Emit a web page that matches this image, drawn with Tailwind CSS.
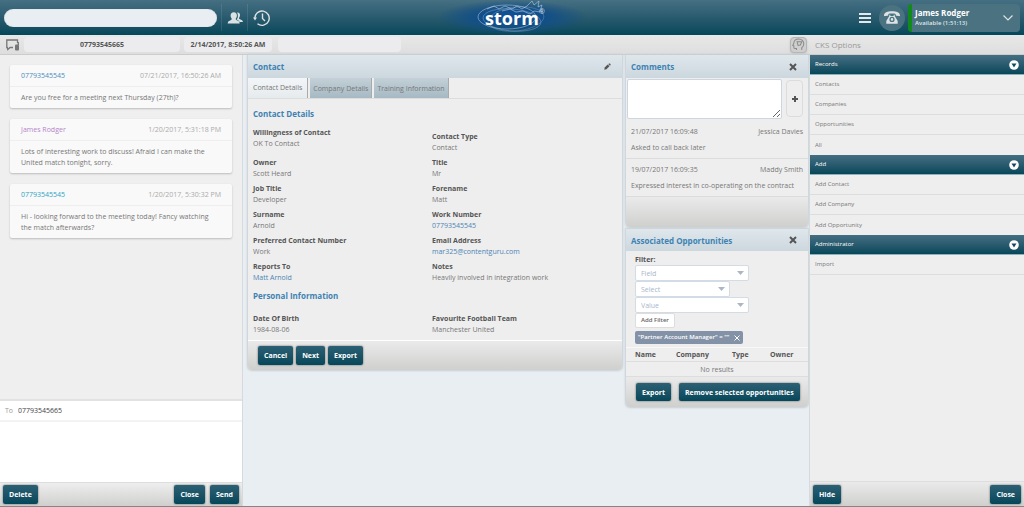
<!DOCTYPE html>
<html lang="en">
  <head>
    <meta charset="UTF-8" />
    <meta name="viewport" content="width=device-width, initial-scale=1.0" />
    <title>storm - Contact</title>
    <script src="https://cdn.jsdelivr.net/npm/@tailwindcss/browser@4"></script>
  </head>
  <body
    class="flex min-h-screen flex-col border-b border-[#858585] bg-[#e8eef2] font-['Open_Sans',sans-serif] text-[7px] leading-[11px] text-[#777]"
  >
    <!-- Top bar -->
    <header
      class="grid h-[35px] grid-cols-[1fr_auto_1fr] bg-linear-to-b from-[#456f83] to-[#04475a]"
    >
      <div class="flex items-center">
        <input
          type="search"
          aria-label="Search"
          class="ml-1 h-[18px] w-[213px] rounded-full bg-[#e8eef1] px-3 shadow-[inset_0_0_1px_#aab8be]"
        />
        <button
          aria-label="Contacts"
          class="ml-1 flex h-[27px] w-[27px] items-center justify-center border-x border-white/10 text-[#dbe2e4]"
        >
          <svg viewBox="0 0 16 12" class="h-3 w-4" fill="currentColor">
            <path
              d="M10 .6c1.500-.3 3 .5 3 2.400 0 1.200-.4 2-.9 2.700-.2.8.1 1.200.8 1.500 1.600.6 3 1 3 2.800H12.500C12.200 8.600 10.800 8 9.700 7.500c.7-.9 1.200-1.900 1.200-3.300C10.900 2.600 10.700 1.500 10 .6z"
            />
            <path
              d="M6.800.3C8.900.3 9.900 1.700 9.900 3.600c0 1.400-.5 2.300-1.100 3-.2 1 .2 1.300 1 1.600 1.600.6 2.900 1.200 2.900 3.300H.7c0-2.100 1.400-2.700 3-3.300.8-.3 1.200-.6 1-1.600-.6-.7-1.100-1.600-1.100-3C3.600 1.700 4.700.3 6.800.3z"
            />
          </svg>
        </button>
        <button
          aria-label="History"
          class="flex h-[27px] w-[28px] items-center justify-center text-[#dbe2e4]"
        >
          <svg
            viewBox="0 0 18 18"
            class="size-[18px]"
            fill="none"
            stroke="currentColor"
            stroke-width="1.4"
          >
            <path d="M1.800 9.500A7.200 7.200 0 1 1 4.500 14.800" />
            <path d="M9.500 4.500v5l2.500 2.500" />
            <path d="M0 8.500h4L2 11.500z" fill="currentColor" stroke="none" />
          </svg>
        </button>
      </div>

      <!-- Logo -->
      <div
        class="relative flex w-[150px] items-center justify-center overflow-hidden bg-[radial-gradient(closest-side,#0f4f9a_0%,#124f88_45%,transparent_100%)]"
      >
        <svg
          viewBox="0 0 150 35"
          class="absolute inset-0 h-full w-full"
          fill="none"
          stroke="#a9c4e4"
          stroke-width=".7"
        >
          <ellipse cx="70" cy="17" rx="29" ry="12" opacity=".8" />
          <ellipse cx="75" cy="20" rx="29" ry="11" transform="rotate(5 75 20)" opacity=".5" />
          <ellipse cx="79" cy="19" rx="28" ry="12" transform="rotate(-6 79 19)" opacity=".4" />
          <path
            d="M50 9l7-3 5 3 6-3 7 3 5-3 5 3 5-3 5-5 2 4 5-4-1 6 4-2-2 7-6-1-4 3-7-3-7 1-6-3-8 2"
            stroke="#b9d4f4"
            opacity=".8"
          />
        </svg>
        <span class="relative text-[18px] leading-[34px] font-bold text-white"
          >storm</span
        >
        <span class="absolute top-[6px] left-[102px] text-[7px] text-[#cfdcea]"
          >®</span
        >
      </div>

      <div class="flex items-center justify-end">
        <button aria-label="Menu" class="mr-2 flex w-3 flex-col gap-[2px]">
          <span class="h-[2px] w-full bg-[#e3e9eb]"></span>
          <span class="h-[2px] w-full bg-[#e3e9eb]"></span>
          <span class="h-[2px] w-full bg-[#e3e9eb]"></span>
        </button>
        <button
          aria-label="Phone"
          class="mr-[3px] flex size-[26px] items-center justify-center rounded-full bg-[#4b7281] text-[#dde3e5]"
        >
          <svg viewBox="0 0 16 13" class="h-[13px] w-4" fill="currentColor">
            <path
              d="M0 4.500C0 1.500 3.500.2 8 .2s8 1.300 8 4.300c0 .5-.4.7-.9.6l-2.800-.4c-.5-.1-.7-.4-.7-.9V2.900C10.500 2.500 5.500 2.500 4.400 2.900v.9c0 .5-.2.8-.7.9l-2.800.4C.4 5.200 0 5 0 4.500z"
            />
            <path
              fill-rule="evenodd"
              d="M5.300 3.800h1V5h3.400V3.800h1v1.300l3 5v2.700H2.300V10l3-5zM8 5.800a2.600 2.600 0 1 0 0 5.200 2.600 2.600 0 0 0 0-5.200zm0 1.300a1.300 1.300 0 1 1 0 2.600 1.300 1.300 0 0 1 0-2.600z"
            />
          </svg>
        </button>
        <button
          class="mr-1 flex h-7 w-[112px] items-center rounded-sm border-l-4 border-[#118a1c] bg-[#4b7281] pr-[7px] pl-[3px] text-left text-white"
        >
          <span class="flex-1">
            <span class="block text-[8px] font-bold">James Rodger</span>
            <span class="block text-[6px] font-semibold text-[#dfe7ea]"
              >Available (1:51:13)</span
            >
          </span>
          <svg
            viewBox="0 0 10 6"
            class="h-[6px] w-[10px]"
            fill="none"
            stroke="#dbe3e6"
            stroke-width="1.2"
          >
            <path d="M.5.5 5 5 9.500.5" />
          </svg>
        </button>
      </div>
    </header>

    <!-- Call info bar -->
    <div
      class="flex h-5 items-center border-b border-[#ccc] bg-linear-to-b from-[#e8e8e8] to-[#dedede] text-[#555]"
    >
      <svg
        viewBox="0 0 14 12"
        class="mr-1 ml-[6px] h-3 w-[14px]"
        fill="none"
        stroke="#777"
        stroke-width="1.3"
      >
        <path d="M7 8.500H4L1.800 10.500 1.300 8.500H.8V1H11.500v3" />
        <rect x="9" y="5.5" width="4" height="6" rx="1" fill="#777" stroke="none" />
        <path d="M12.300 3v3" />
      </svg>
      <span
        class="w-[156px] rounded-sm bg-[#ececee] py-[2px] text-center font-bold"
        >07793545665</span
      >
      <span
        class="ml-1 w-[88px] rounded-sm bg-[#ececee] py-[2px] text-center font-bold"
        >2/14/2017, 8:50:26 AM</span
      >
      <span class="ml-[6px] h-[15px] w-[123px] rounded-sm bg-[#ececee]"></span>
      <button
        aria-label="Agent"
        class="ml-auto flex h-4 w-[17px] items-center justify-center rounded-sm border border-[#b5b5b5] bg-[#cfcfcf] shadow-sm"
      >
        <svg
          viewBox="0 0 14 14"
          class="size-[13px] shrink-0"
          fill="none"
          stroke="#8b8b8b"
          stroke-width="1.1"
        >
          <path
            d="M10.500 13v-2.500c1.500-1 2.200-2.500 2.200-4.200C12.700 3.200 10.300 1 7.300 1 4 1 2 3 2 5.500L.8 8l1.200.5v1.800c0 .7.4.9 1 .9h1.800V13"
          />
          <path d="M5.500 4h5L9 7.500 6.500 8z" />
        </svg>
      </button>
      <span class="ml-[2px] w-[215px] pl-[6px] text-[8px] text-[#999]"
        >CKS Options</span
      >
    </div>

    <div class="flex flex-1">
      <!-- Messages -->
      <section
        class="flex w-[243px] flex-col border-r border-[#d5dade] bg-[#efefef]"
      >
        <div class="flex flex-1 flex-col gap-[11px] p-[10px]">
          <article class="rounded-xs bg-[#f9f9f9] shadow-[0_1px_2px_#bbb]">
            <div
              class="flex justify-between border-b border-[#eee] px-[11px] py-[5px] text-[#aaa]"
            >
              <a href="#" class="text-[#4d8dbb]">07793545545</a>
              <time>07/21/2017, 16:50:26 AM</time>
            </div>
            <p class="px-[11px] py-[5px]">
              Are you free for a meeting next Thursday (27th)?
            </p>
          </article>
          <article class="rounded-xs bg-[#f9f9f9] shadow-[0_1px_2px_#bbb]">
            <div
              class="flex justify-between border-b border-[#eee] px-[11px] py-[5px] text-[#aaa]"
            >
              <a href="#" class="text-[#b584c9]">James Rodger</a>
              <time>1/20/2017, 5:31:18 PM</time>
            </div>
            <p class="px-[11px] py-[5px]">
              Lots of interesting work to discuss! Afraid I can make the United
              match tonight, sorry.
            </p>
          </article>
          <article class="rounded-xs bg-[#f9f9f9] shadow-[0_1px_2px_#bbb]">
            <div
              class="flex justify-between border-b border-[#eee] px-[11px] py-[5px] text-[#aaa]"
            >
              <a href="#" class="text-[#2ca3c4]">07793545545</a>
              <time>1/20/2017, 5:30:32 PM</time>
            </div>
            <p class="px-[11px] py-[5px]">
              Hi - looking forward to the meeting today! Fancy watching the
              match afterwards?
            </p>
          </article>
        </div>
        <div
          class="flex h-[23px] items-center border-t-2 border-b-2 border-t-[#e2e2e2] border-b-[#f3f3f3] bg-white px-[5px]"
        >
          <label for="to" class="w-[13px] text-[#999]">To</label>
          <input id="to" value="07793545665" class="flex-1 text-[#444]" />
        </div>
        <textarea
          aria-label="Message"
          class="block h-[60px] resize-none bg-white p-[5px]"
        ></textarea>
        <div
          class="flex h-6 items-center gap-[5px] border-t border-[#ddd] bg-linear-to-b from-[#eee] to-[#cfd0ce] px-[3px]"
        >
          <button
            class="h-[19px] rounded-xs bg-linear-to-b from-[#2c6074] to-[#04475a] px-[6px] font-bold text-white shadow-[0_0_2px_#555]"
          >
            Delete
          </button>
          <button
            class="ml-auto h-[19px] rounded-xs bg-linear-to-b from-[#2c6074] to-[#04475a] px-[6px] font-bold text-white shadow-[0_0_2px_#555]"
          >
            Close
          </button>
          <button
            class="h-[19px] rounded-xs bg-linear-to-b from-[#2c6074] to-[#04475a] px-[6px] font-bold text-white shadow-[0_0_2px_#555]"
          >
            Send
          </button>
        </div>
      </section>

      <main class="flex flex-1 items-start gap-1 pr-[1px] pl-[5px]">
        <!-- Contact -->
        <section
          class="flex-1 rounded-b-sm bg-[#eee] shadow-[0_0_2px_1px_#c6cfd4]"
        >
          <div
            class="flex h-[23px] items-center justify-between bg-linear-to-b from-[#dfe7ec] to-[#ccd7de] px-[5px]"
          >
            <h2 class="text-[8px] font-bold text-[#3e82b2]">Contact</h2>
            <button aria-label="Edit" class="mr-[6px]">
              <svg viewBox="0 0 8 8" class="size-[7px]" fill="#555">
                <path d="M.3 7.700.8 5.200 4.200 1.800 6.200 3.800 2.800 7.200z" />
                <path d="M4.800 1.200C5.600.3 6.400.2 7.100.9c.7.7.6 1.500-.3 2.300z" />
              </svg>
            </button>
          </div>
          <nav class="flex h-[21px] gap-[2px] border-b border-[#ddd]">
            <a
              href="#"
              class="border-r border-[#aaa] bg-linear-to-b from-[#f3f6f8] to-[#e6ebee] px-[5px] py-1"
              >Contact Details</a
            >
            <a
              href="#"
              class="border-r border-[#aaa] bg-linear-to-b from-[#c3d0d7] to-[#a6b9c3] px-[3px] py-[5px]"
              >Company Details</a
            >
            <a
              href="#"
              class="border-r border-[#aaa] bg-linear-to-b from-[#c3d0d7] to-[#a6b9c3] px-[3px] py-[5px]"
              >Training Information</a
            >
          </nav>
          <div class="px-[5px] pt-[9px] pb-[5px]">
            <h3 class="text-[8px] font-bold text-[#3e82b2]">Contact Details</h3>
            <dl
              class="mt-2 grid grid-cols-[179px_1fr] grid-rows-[26px] items-start gap-y-[4px]"
            >
              <div>
                <dt class="font-bold text-[#555]">Willingness of Contact</dt>
                <dd>OK To Contact</dd>
              </div>
              <div class="self-end">
                <dt class="font-bold text-[#555]">Contact Type</dt>
                <dd>Contact</dd>
              </div>
              <div>
                <dt class="font-bold text-[#555]">Owner</dt>
                <dd>Scott Heard</dd>
              </div>
              <div>
                <dt class="font-bold text-[#555]">Title</dt>
                <dd>Mr</dd>
              </div>
              <div>
                <dt class="font-bold text-[#555]">Job Title</dt>
                <dd>Developer</dd>
              </div>
              <div>
                <dt class="font-bold text-[#555]">Forename</dt>
                <dd>Matt</dd>
              </div>
              <div>
                <dt class="font-bold text-[#555]">Surname</dt>
                <dd>Arnold</dd>
              </div>
              <div>
                <dt class="font-bold text-[#555]">Work Number</dt>
                <dd><a href="#" class="text-[#4d84b4]">07793545545</a></dd>
              </div>
              <div>
                <dt class="font-bold text-[#555]">Preferred Contact Number</dt>
                <dd>Work</dd>
              </div>
              <div>
                <dt class="font-bold text-[#555]">Email Address</dt>
                <dd>
                  <a href="#" class="text-[#4d84b4]">mar325@contentguru.com</a>
                </dd>
              </div>
              <div>
                <dt class="font-bold text-[#555]">Reports To</dt>
                <dd><a href="#" class="text-[#4d84b4]">Matt Arnold</a></dd>
              </div>
              <div>
                <dt class="font-bold text-[#555]">Notes</dt>
                <dd>Heavily involved in integration work</dd>
              </div>
            </dl>
            <h3 class="mt-[7px] text-[8px] font-bold text-[#3e82b2]">
              Personal Information
            </h3>
            <dl class="mt-3 grid grid-cols-[179px_1fr]">
              <div>
                <dt class="font-bold text-[#555]">Date Of Birth</dt>
                <dd>1984-08-06</dd>
              </div>
              <div>
                <dt class="font-bold text-[#555]">Favourite Football Team</dt>
                <dd>Manchester United</dd>
              </div>
            </dl>
          </div>
          <div
            class="flex h-[30px] items-center gap-[3px] rounded-b-sm border-t border-white bg-linear-to-b from-[#eaeaea] to-[#cfd0ce] px-[10px]"
          >
            <button
              class="h-[19px] rounded-xs bg-linear-to-b from-[#2c6074] to-[#04475a] px-[6px] font-bold text-white shadow-[0_0_2px_#555]"
            >
              Cancel
            </button>
            <button
              class="h-[19px] rounded-xs bg-linear-to-b from-[#2c6074] to-[#04475a] px-[6px] font-bold text-white shadow-[0_0_2px_#555]"
            >
              Next
            </button>
            <button
              class="h-[19px] rounded-xs bg-linear-to-b from-[#2c6074] to-[#04475a] px-[6px] font-bold text-white shadow-[0_0_2px_#555]"
            >
              Export
            </button>
          </div>
        </section>

        <div class="flex w-[182px] flex-col gap-[2px]">
          <!-- Comments -->
          <section class="rounded-b-sm bg-[#eee] shadow-[0_0_2px_1px_#c6cfd4]">
            <div
              class="flex h-[23px] items-center justify-between bg-linear-to-b from-[#dfe7ec] to-[#ccd7de] px-[5px]"
            >
              <h2 class="text-[8px] font-bold text-[#3e82b2]">Comments</h2>
              <button aria-label="Close comments" class="mr-[6px]">
                <svg viewBox="0 0 8 8" class="size-2" stroke="#555" stroke-width="2">
                  <path d="M1 1l6 6M7 1L1 7" />
                </svg>
              </button>
            </div>
            <div class="flex gap-1 px-[1px] pt-[1px]">
              <textarea
                aria-label="New comment"
                class="block h-10 flex-1 rounded-xs border border-[#ccd6e0] bg-white p-1"
              ></textarea>
              <button
                aria-label="Add comment"
                class="mt-[1px] mr-[4px] flex h-[37px] w-[17px] items-center justify-center rounded-sm border border-[#dcdcdc]"
              >
                <svg viewBox="0 0 6 6" class="size-[6px]" stroke="#555" stroke-width="2">
                  <path d="M3 0v6M0 3h6" />
                </svg>
              </button>
            </div>
            <div class="border-b border-[#dcdcdc] px-[5px] pt-[7px] pb-[5px]">
              <div class="flex justify-between">
                <time>21/07/2017 16:09:48</time><span>Jessica Davies</span>
              </div>
              <p class="mt-[5px]">Asked to call back later</p>
            </div>
            <div class="border-b border-[#dcdcdc] px-[5px] pt-[5px] pb-[5px]">
              <div class="flex justify-between">
                <time>19/07/2017 16:09:35</time><span>Maddy Smith</span>
              </div>
              <p class="mt-[5px]">
                Expressed interest in co-operating on the contract
              </p>
            </div>
            <div
              class="h-[30px] rounded-b-sm bg-linear-to-b from-[#eaeaea] to-[#cfd0ce]"
            ></div>
          </section>

          <!-- Associated opportunities -->
          <section class="rounded-b-sm bg-[#eee] shadow-[0_0_2px_1px_#c6cfd4]">
            <div
              class="flex h-[22px] items-center justify-between bg-linear-to-b from-[#dfe7ec] to-[#ccd7de] px-[5px]"
            >
              <h2 class="text-[8px] font-bold text-[#3e82b2]">
                Associated Opportunities
              </h2>
              <button aria-label="Close opportunities" class="mr-[6px]">
                <svg viewBox="0 0 8 8" class="size-2" stroke="#555" stroke-width="2">
                  <path d="M1 1l6 6M7 1L1 7" />
                </svg>
              </button>
            </div>
            <div class="flex flex-col items-start px-[9px] pt-[3px] pb-[3px]">
              <label for="field" class="font-bold text-[#555]">Filter:</label>
              <div class="relative">
                <select
                  id="field"
                  class="block h-4 w-[114px] appearance-none rounded-xs border border-[#d3dbe4] bg-white px-[5px] text-[#a9b7c9]"
                >
                  <option>Field</option>
                </select>
                <svg
                  viewBox="0 0 7 4"
                  class="pointer-events-none absolute top-[6px] right-[5px] h-1 w-[7px]"
                  fill="#a9b7c9"
                >
                  <path d="M0 0h7L3.500 4z" />
                </svg>
              </div>
              <div class="relative">
                <select
                  aria-label="Select"
                  class="block h-4 w-[95px] appearance-none rounded-xs border border-[#d3dbe4] bg-white px-[5px] text-[#a9b7c9]"
                >
                  <option>Select</option>
                </select>
                <svg
                  viewBox="0 0 7 4"
                  class="pointer-events-none absolute top-[6px] right-[5px] h-1 w-[7px]"
                  fill="#a9b7c9"
                >
                  <path d="M0 0h7L3.500 4z" />
                </svg>
              </div>
              <div class="relative">
                <select
                  aria-label="Value"
                  class="block h-4 w-[114px] appearance-none rounded-xs border border-[#d3dbe4] bg-white px-[5px] text-[#a9b7c9]"
                >
                  <option>Value</option>
                </select>
                <svg
                  viewBox="0 0 7 4"
                  class="pointer-events-none absolute top-[6px] right-[5px] h-1 w-[7px]"
                  fill="#a9b7c9"
                >
                  <path d="M0 0h7L3.500 4z" />
                </svg>
              </div>
              <button
                class="h-[15px] rounded-xs border border-[#ddd] bg-white px-[5px] text-[6px] font-semibold text-[#666]"
              >
                Add Filter
              </button>
              <span
                class="mt-[3px] flex h-[13px] items-center gap-[5px] rounded-xs bg-[#8492a8] px-[3px] text-[6px] font-semibold text-white"
              >
                "Partner Account Manager" = ""
                <button aria-label="Remove filter">
                  <svg viewBox="0 0 6 6" class="size-[6px]" stroke="#fff">
                    <path d="M.5.5l5 5M5.500.5l-5 5" />
                  </svg>
                </button>
              </span>
            </div>
            <table class="w-full border-t border-[#f8f8f8] text-left">
              <thead>
                <tr class="h-[14px] text-[#555]">
                  <th class="w-[50px] pl-[9px]">Name</th>
                  <th class="w-[56px]">Company</th>
                  <th class="w-[38px]">Type</th>
                  <th>Owner</th>
                </tr>
              </thead>
              <tbody>
                <tr class="h-[15px] border-y border-[#ddd]">
                  <td colspan="4" class="text-center">No results</td>
                </tr>
              </tbody>
            </table>
            <div
              class="flex h-[30px] items-center gap-2 rounded-b-sm bg-linear-to-b from-[#eaeaea] to-[#cfd0ce] px-[10px]"
            >
              <button
                class="h-[18px] rounded-xs bg-linear-to-b from-[#2c6074] to-[#04475a] px-[6px] font-bold text-white shadow-[0_0_2px_#555]"
              >
                Export
              </button>
              <button
                class="h-[18px] rounded-xs bg-linear-to-b from-[#2c6074] to-[#04475a] px-[6px] font-bold whitespace-nowrap text-white shadow-[0_0_2px_#555]"
              >
                Remove selected opportunities
              </button>
            </div>
          </section>
        </div>
      </main>

      <!-- Options -->
      <aside
        class="flex w-[215px] flex-col border-l border-[#d5dade] bg-[#eee] text-[6px]"
      >
        <nav class="flex-1">
          <button
            class="flex h-5 w-full items-center justify-between border-b border-[#8fb0bd] bg-linear-to-b from-[#456f83] to-[#04475a] px-[5px] text-white"
          >
            Records
            <svg viewBox="0 0 10 10" class="size-[10px]">
              <circle cx="5" cy="5" r="4.8" fill="#fff" />
              <path d="M2.500 3.500h5L5 7.500z" fill="#0d4c60" />
            </svg>
          </button>
          <a href="#" class="flex h-5 items-center border-b border-[#ddd] px-[5px]">Contacts</a>
          <a href="#" class="flex h-5 items-center border-b border-[#ddd] px-[5px]">Companies</a>
          <a href="#" class="flex h-5 items-center border-b border-[#ddd] px-[5px]">Opportunities</a>
          <a href="#" class="flex h-5 items-center px-[5px]">All</a>
          <button
            class="flex h-5 w-full items-center justify-between border-b border-[#8fb0bd] bg-linear-to-b from-[#456f83] to-[#04475a] px-[5px] text-white"
          >
            Add
            <svg viewBox="0 0 10 10" class="size-[10px]">
              <circle cx="5" cy="5" r="4.8" fill="#fff" />
              <path d="M2.500 3.500h5L5 7.500z" fill="#0d4c60" />
            </svg>
          </button>
          <a href="#" class="flex h-5 items-center border-b border-[#ddd] px-[5px]">Add Contact</a>
          <a href="#" class="flex h-5 items-center border-b border-[#ddd] px-[5px]">Add Company</a>
          <a href="#" class="flex h-5 items-center px-[5px]">Add Opportunity</a>
          <button
            class="flex h-5 w-full items-center justify-between border-b border-[#8fb0bd] bg-linear-to-b from-[#456f83] to-[#04475a] px-[5px] text-white"
          >
            Administrator
            <svg viewBox="0 0 10 10" class="size-[10px]">
              <circle cx="5" cy="5" r="4.8" fill="#fff" />
              <path d="M2.500 3.500h5L5 7.500z" fill="#0d4c60" />
            </svg>
          </button>
          <a href="#" class="flex h-5 items-center border-b border-[#ddd] px-[5px]">Import</a>
        </nav>
        <div
          class="flex h-[25px] items-center justify-between border-t border-[#ddd] bg-linear-to-b from-[#eaeaea] to-[#cfd0ce] px-[3px] text-[7px]"
        >
          <button
            class="h-[19px] rounded-xs bg-linear-to-b from-[#2c6074] to-[#04475a] px-[6px] font-bold text-white shadow-[0_0_2px_#555]"
          >
            Hide
          </button>
          <button
            class="h-[19px] rounded-xs bg-linear-to-b from-[#2c6074] to-[#04475a] px-[6px] font-bold text-white shadow-[0_0_2px_#555]"
          >
            Close
          </button>
        </div>
      </aside>
    </div>
  </body>
</html>
